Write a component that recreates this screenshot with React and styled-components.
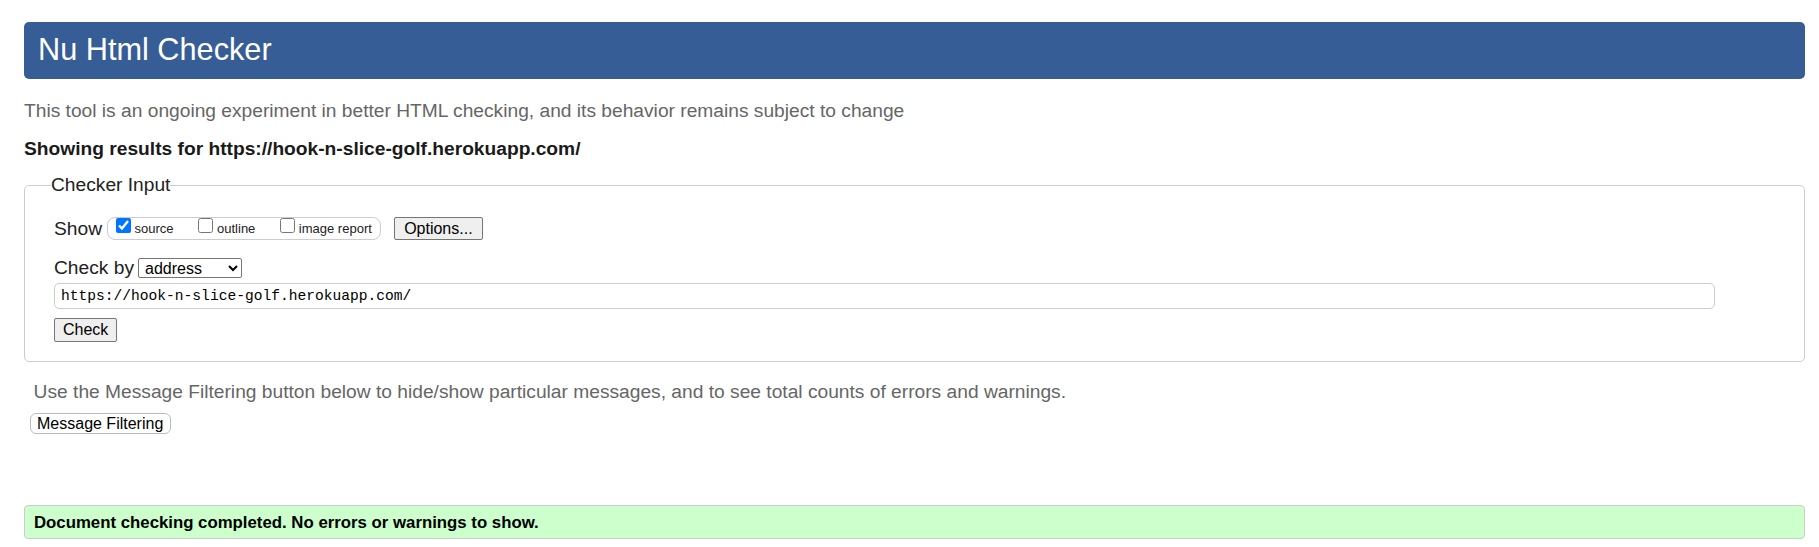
import styled, { createGlobalStyle } from "styled-components";

const GlobalStyle = createGlobalStyle`
  html, body {
    margin: 0;
    padding: 0;
    background: #fff;
  }
  body {
    font-family: "Liberation Sans", Arial, Helvetica, sans-serif;
    font-size: 19.2px;
    color: #222;
  }
`;

const Page = styled.div`
  padding: 22px 14px 20px 24px;
`;

const Title = styled.h1`
  margin: 0;
  background: #365d95;
  color: #fff;
  font-weight: normal;
  font-size: 30.7px;
  line-height: 35px;
  padding: 10px 14px 12px;
  border-radius: 5px;
`;

const Intro = styled.p`
  margin: 21px 0 0;
  color: #666;
  line-height: 22px;
`;

const Results = styled.p`
  margin: 16px 0 0;
  font-weight: bold;
  line-height: 22px;
  color: #1a1a1a;
`;

const Fieldset = styled.fieldset`
  margin: 14px 0 0;
  border: 1px solid #ccc;
  border-radius: 5px;
  padding: 21px 89px 19.5px 29px;
  min-width: 0;
`;

const Legend = styled.legend`
  padding: 0;
  margin-left: -3px;
  line-height: 22px;
  color: #222;
`;

const Row = styled.div`
  display: flex;
  align-items: center;
  height: ${(p) => p.h}px;
  margin-top: ${(p) => p.top || 0}px;
`;

const Label = styled.span`
  line-height: 22px;
  color: #222;
`;

const ShowGroup = styled.span`
  display: inline-flex;
  align-items: center;
  box-sizing: border-box;
  height: 23px;
  margin-left: 4.5px;
  padding: 0 8.5px 0 3px;
  gap: 19.5px;
  border: 1px solid #ccc;
  border-radius: 8px;
`;

const CheckItem = styled.label`
  display: inline-flex;
  align-items: center;
  font-size: 13px;
  line-height: 15px;
  color: #222;

  input {
    width: 15px;
    height: 15px;
    margin: 0 4px 6px 5px;
  }
`;

const Button = styled.button`
  box-sizing: border-box;
  height: ${(p) => p.h}px;
  margin-left: ${(p) => p.ml || 0}px;
  padding: 0 ${(p) => p.px || 8}px;
  font-family: "Liberation Sans", Arial, sans-serif;
  font-size: 16px;
  color: #000;
  background: #efefef;
  border: 1px solid #767676;
  border-radius: 2px;
`;

const Select = styled.select`
  box-sizing: border-box;
  width: 104px;
  height: 20px;
  margin-left: 4px;
  font-family: "Liberation Sans", Arial, sans-serif;
  font-size: 16px;
  color: #000;
  background: #fff;
  border: 1px solid #767676;
  border-radius: 2px;
  padding: 0 0 0 2px;
`;

const UrlInput = styled.input`
  display: block;
  box-sizing: border-box;
  width: 100%;
  height: 26px;
  margin-top: 4px;
  padding: 0 6px;
  font-family: "Liberation Mono", "DejaVu Sans Mono", monospace;
  font-size: 14.6px;
  color: #000;
  border: 1px solid #ccc;
  border-radius: 5px;
  outline: none;
`;

const Note = styled.p`
  margin: 19px 0 0 9.6px;
  line-height: 22px;
  color: #666;
`;

const FilterButton = styled.button`
  display: block;
  box-sizing: border-box;
  height: 21px;
  margin: 10px 0 0 5.5px;
  padding: 0 6.5px;
  font-family: "Liberation Sans", Arial, sans-serif;
  font-size: 16px;
  color: #000;
  background: #fff;
  border: 1px solid #bbb;
  border-radius: 6px;
`;

const Success = styled.div`
  margin-top: 71px;
  padding: 6.5px 9px;
  font-size: 16.8px;
  font-weight: bold;
  line-height: 19px;
  color: #000;
  background: #ccffcc;
  border: 1px solid #ccc;
  border-radius: 4px;
`;

export default function App() {
  const url = "https://hook-n-slice-golf.herokuapp.com/";
  return (
    <Page>
      <GlobalStyle />
      <Title>Nu Html Checker</Title>
      <Intro>
        This tool is an ongoing experiment in better HTML checking, and its
        behavior remains subject to change
      </Intro>
      <Results>Showing results for {url}</Results>
      <Fieldset>
        <Legend>Checker Input</Legend>
        <Row h={23}>
          <Label>Show</Label>
          <ShowGroup>
            <CheckItem>
              <input type="checkbox" defaultChecked />
              source
            </CheckItem>
            <CheckItem>
              <input type="checkbox" />
              outline
            </CheckItem>
            <CheckItem>
              <input type="checkbox" />
              image report
            </CheckItem>
          </ShowGroup>
          <Button h={23} ml={12.3} px={9.5}>
            Options...
          </Button>
        </Row>
        <Row h={22} top={17.3}>
          <Label>Check by</Label>
          <Select defaultValue="address">
            <option value="address">address</option>
            <option value="upload">file upload</option>
            <option value="text">text input</option>
          </Select>
        </Row>
        <UrlInput type="url" defaultValue={url} />
        <Row h={24} top={8.4}>
          <Button h={24}>Check</Button>
        </Row>
      </Fieldset>
      <Note>
        Use the Message Filtering button below to hide/show particular
        messages, and to see total counts of errors and warnings.
      </Note>
      <FilterButton>Message Filtering</FilterButton>
      <Success>Document checking completed. No errors or warnings to show.</Success>
    </Page>
  );
}
